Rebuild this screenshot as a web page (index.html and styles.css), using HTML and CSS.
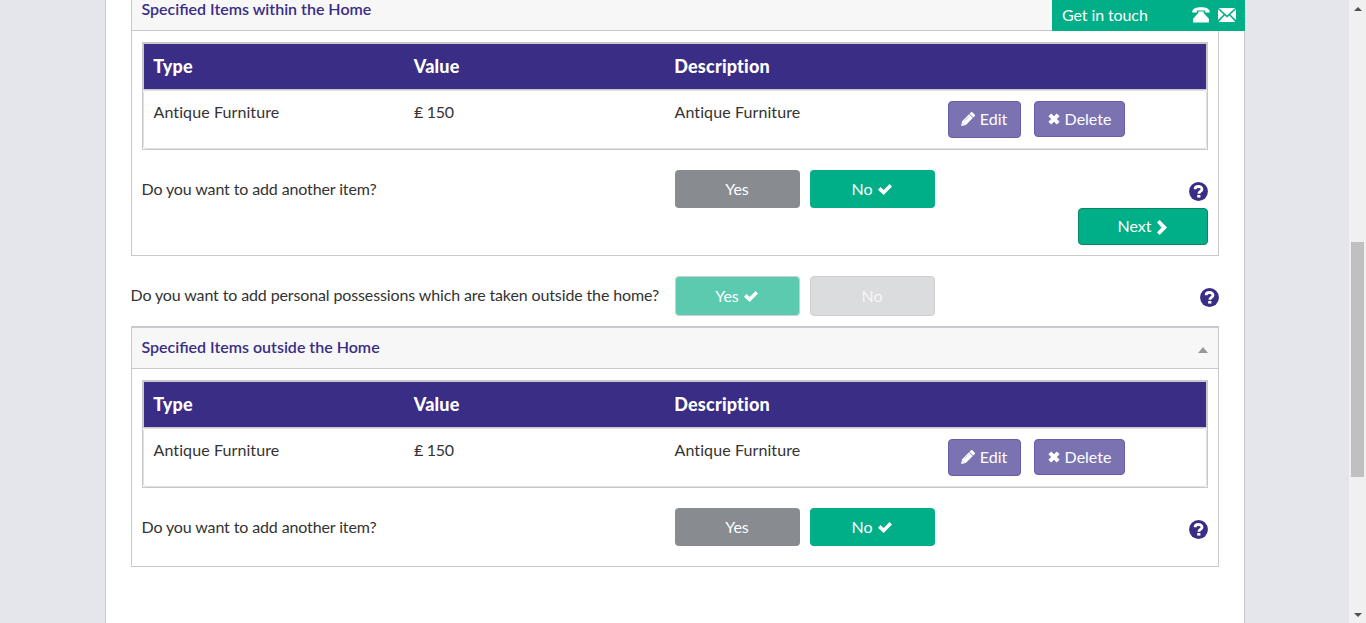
FILE: index.html
```html
<!DOCTYPE html>
<html lang="en">
<head>
<meta charset="utf-8">
<title>Specified Items</title>
<link rel="stylesheet" href="styles.css">
</head>
<body>
<svg class="defs" width="0" height="0">
  <symbol id="pencil" viewBox="0 0 14 14"><path d="M9.8.4a1.300 1.300 0 0 1 1.800 0l2 2a1.300 1.300 0 0 1 0 1.800l-1.300 1.300-3.800-3.800zM8 2.200L11.800 6l-7 7-4.700.9 1-4.700z"/><path class="cut" d="M3.400 8.900l4.600-4.600M1.500 11l1.500 1.500"/></symbol>
  <symbol id="cross" viewBox="0 0 12 12"><path d="M3.200.4L6 3.200 8.800.4l2.800 2.800L8.800 6l2.800 2.800-2.800 2.800L6 8.800l-2.800 2.800L.4 8.800 3.200 6 .4 3.200z"/></symbol>
  <symbol id="check" viewBox="0 0 14 11"><path d="M11.500 0L14 2.400 5.700 11 0 5.700l2.500-2.600 3.200 2.900z"/></symbol>
  <symbol id="chevron" viewBox="0 0 10 15"><path d="M2.700 0L10 7.500 2.700 15 0 12.400l4.500-4.900L0 2.600z"/></symbol>
  <symbol id="help" viewBox="0 0 19 19"><circle cx="9.5" cy="9.5" r="9.4"/><path class="mark" d="M6.100 7.200C6.100 3.600 13 3.600 13 7.200c0 2.200-3.200 2.200-3.200 4.600"/><path class="dot" d="M8.200 13h3.200v2.600H8.200z"/></symbol>
</svg>
<div class="window">
  <main class="sheet">
    <section class="panel">
      <header class="panel-head"><h2>Specified Items within the Home</h2></header>
      <div class="panel-body">
        <div class="table">
          <div class="row head"><span>Type</span><span>Value</span><span>Description</span></div>
          <div class="row item"><span>Antique Furniture</span><span class="price">₤ 150</span><span>Antique Furniture</span>
            <div class="actions"><button class="btn edit"><svg class="i14"><use href="#pencil"/></svg>Edit</button><button class="btn delete"><svg class="i12"><use href="#cross"/></svg>Delete</button></div>
          </div>
        </div>
        <div class="question inner"><p>Do you want to add another item?</p><button class="btn choice">Yes</button><button class="btn choice on">No<svg class="tick"><use href="#check"/></svg></button><svg class="help"><use href="#help"/></svg></div>
        <div class="foot"><button class="btn next">Next<svg class="chev"><use href="#chevron"/></svg></button></div>
      </div>
    </section>
    <div class="question outer"><p>Do you want to add personal possessions which are taken outside the home?</p><button class="btn choice on faded">Yes<svg class="tick"><use href="#check"/></svg></button><button class="btn choice faded">No</button><svg class="help"><use href="#help"/></svg></div>
    <section class="panel">
      <header class="panel-head"><h2>Specified Items outside the Home</h2><span class="caret"></span></header>
      <div class="panel-body short">
        <div class="table">
          <div class="row head"><span>Type</span><span>Value</span><span>Description</span></div>
          <div class="row item"><span>Antique Furniture</span><span class="price">₤ 150</span><span>Antique Furniture</span>
            <div class="actions"><button class="btn edit"><svg class="i14"><use href="#pencil"/></svg>Edit</button><button class="btn delete"><svg class="i12"><use href="#cross"/></svg>Delete</button></div>
          </div>
        </div>
        <div class="question inner"><p>Do you want to add another item?</p><button class="btn choice">Yes</button><button class="btn choice on">No<svg class="tick"><use href="#check"/></svg></button><svg class="help"><use href="#help"/></svg></div>
      </div>
    </section>
  </main>
  <div class="scrollbar"><span class="arrow up"></span><span class="thumb"></span><span class="arrow down"></span></div>
  <aside class="contact"><span>Get in touch</span>
    <svg class="phone" viewBox="0 0 18 16"><path d="M.3 5.500C-.3 1.800 4 .2 9 .2s9.300 1.600 8.700 5.300h-4.500V3.400H4.800v2.100zM6.300 4.500h5.400v1.600l5.200 5.600v3.800H1.100v-3.800l5.200-5.600z"/></svg>
    <svg class="mail" viewBox="0 0 18 14"><path d="M.8 0h16.400L9 7.500zM0 1.200L5.600 6.500 0 12zM18 1.200L12.400 6.500 18 12zM6.600 7.400L9 9.600l2.400-2.200 5.900 6.600H.7z"/></svg>
  </aside>
</div>
</body>
</html>
```
FILE: styles.css
```css
* { box-sizing: border-box; }
body { margin: 0; background: #e5e6eb; font: 16px/24px Lato, sans-serif; color: #333; }
h2, p { margin: 0; }
svg { display: block; fill: currentColor; flex: none; }
.defs { position: absolute; }
.window { position: relative; display: flex; justify-content: space-between; height: 623px; overflow: hidden; }
.sheet { width: 1140px; height: 700px; margin-left: 105px; padding: 0 25px; background: #fff; border: solid #c8c8cd; border-width: 0 1px; margin-top: -12px; }
.panel { border: 1px solid #c8c8cd; border-top-width: 2px; }
.panel-head { display: flex; justify-content: space-between; height: 41px; padding: 7px 10px 0 9px; background: #f7f7f7; border-bottom: 1px solid #c8c8cd; }
h2 { font-size: 16px; line-height: 24px; font-weight: 600; color: #392d86; padding-left: .4px; }
.caret { width: 0; height: 0; margin-top: 12px; border: 5px solid transparent; border-top: 0; border-bottom: 6px solid #999; }
.panel-body { height: 224px; padding: 11px 10px 0; }
.panel-body.short { height: 197px; }
.table { height: 108px; border: 1px solid #c8c8cd; font-variant-ligatures: none; }
.row { display: grid; grid-template-columns: 260.5px 260.5px 273px 1fr; padding-left: 9.5px; }
.head { height: 47px; padding: 10px 0 0 9.2px; background: #392d86; color: #fff; border: 1px solid #c8c8cd; font-size: 18px; font-weight: 900; letter-spacing: .2px; }
.item { height: 59px; padding-top: 10px; border: 1px solid #e0e0e3; border-radius: 3px; }
.item > span { margin-top: -1px; letter-spacing: .1px; }
.item > .price { letter-spacing: -.3px; }
.actions { display: flex; align-items: flex-start; gap: 13px; padding-left: .5px; }
.btn { display: flex; align-items: center; justify-content: center; font: 16px/22px Lato, sans-serif; color: #fff; border: 1px solid transparent; border-radius: 4px; padding: 0; }
.edit, .delete { background: #7b73b1; border-color: #685da7; gap: 5px; }
.edit { width: 73px; height: 37px; padding: 0 1px 1px 0; }
.delete { width: 91px; height: 36px; }
.i14 { width: 14px; height: 14px; }
.i12 { width: 12px; height: 12px; }
.cut { fill: none; stroke: #7b73b1; stroke-width: .4; }
.question { display: flex; align-items: flex-start; }
.question p { letter-spacing: -.125px; }
.choice { width: 125px; height: 38px; margin-right: 10px; padding-right: 1px; background: #888b90; gap: 5px; }
.on { background: #00ae87; padding-right: 2px; }
.tick { width: 14px; height: 11px; margin-top: 1px; }
.help { width: 19px; height: 19px; margin-left: auto; color: #392d86; }
.mark { fill: none; stroke: #fff; stroke-width: 2.8; }
.dot { fill: #fff; }
.inner { height: 58px; padding-top: 20px; }
.inner p { width: 533px; padding-top: 7px; text-indent: -.5px; }
.inner .help { margin-top: 12px; }
.foot { display: flex; justify-content: flex-end; }
.next { width: 130px; height: 37px; padding: 0 2px 1px 0; background: #00ae87; border-color: #078763; gap: 5px; }
.chev { width: 10px; height: 15px; margin-top: 2px; }
.outer { height: 70px; padding-top: 20px; }
.outer p { width: 544px; padding-top: 7px; white-space: nowrap; text-indent: -.5px; }
.outer .choice { height: 40px; }
.outer .help { margin-top: 12px; }
.faded { background: #dbdcde; border-color: #cdced1; color: #f6f6f7; }
.faded.on { background: #5bcaae; border-color: #c8d1d0; color: #fff; }
.scrollbar { display: flex; flex-direction: column; align-items: center; width: 17px; height: 623px; padding: 7px 0 6px; background: #f0f0f0; }
.thumb { width: 13px; height: 235px; margin-top: 231px; background: #c0c0c0; }
.arrow { width: 0; height: 0; border: 4px solid transparent; }
.up { border-top: 0; border-bottom-color: #505050; }
.down { margin-top: auto; border-bottom: 0; border-top-color: #505050; }
.contact { position: absolute; top: 0; left: 1052px; width: 193px; height: 31px; display: flex; align-items: center; padding: 0 9px 1px 10px; color: #fff; background: #00ae87; letter-spacing: -.1px; }
.phone { width: 18px; height: 16px; margin-left: auto; margin-right: 8px; }
.mail { width: 18px; height: 14px; }
```
